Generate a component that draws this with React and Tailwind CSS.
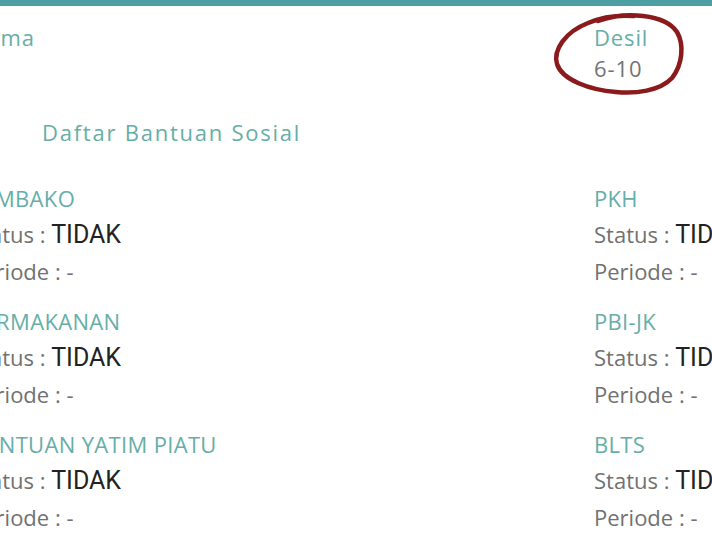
const programs = {
  left: ['SEMBAKO', 'PERMAKANAN', 'BANTUAN YATIM PIATU'],
  right: ['PKH', 'PBI-JK', 'BLTS'],
};

function Program({ name, status = 'TIDAK', period = '-' }) {
  return (
    <div className="mb-[14px] text-[22px] leading-[36px] whitespace-nowrap">
      <div className="text-[#66aea7] tracking-[0.015em]">{name}</div>
      <div className="text-[#717171]">
        Status :{' '}
        <span className="font-['Roboto'] text-[25px] text-[#222]">{status}</span>
      </div>
      <div className="text-[#717171]">Periode : {period}</div>
    </div>
  );
}

// hand drawn marker ring around the decile value
function Ring() {
  return (
    <svg
      className="absolute left-[-44px] top-[-14px] pointer-events-none"
      width="140"
      height="96"
      viewBox="0 0 140 96"
      fill="none"
    >
      <path
        d="M48 13 C75 3, 115 6, 127 24 C134 36, 133 56, 122 70 C110 83, 85 86, 66 84 C40 82, 12 72, 7 56 C3 42, 15 24, 38 15 C52 9, 70 7, 84 8"
        stroke="#8a1a1c"
        strokeWidth="4.5"
        strokeLinecap="round"
      />
    </svg>
  );
}

export default function App() {
  return (
    <div className="w-[712px] h-[534px] overflow-hidden bg-white font-['Open_Sans',sans-serif]">
      <div className="h-[6px] bg-[#4d9fa4]" />
      <div className="ml-[-30px]">
        <div className="grid grid-cols-[624px_1fr] pt-[16px] text-[22px] leading-[30px]">
          <div className="text-[#66aea7] tracking-[0.04em]">Nama</div>
          <div>
            <div className="relative w-fit">
              <div className="text-[#66aea7] tracking-[0.04em]">Desil</div>
              <div className="mt-[1px] text-[#747474] tracking-[0.04em]">6-10</div>
              <Ring />
            </div>
          </div>
        </div>
        <h2 className="ml-[72px] mt-[34px] text-[22px] leading-[30px] text-[#66aea7] tracking-[0.08em]">
          Daftar Bantuan Sosial
        </h2>
        <div className="grid grid-cols-[624px_1fr] mt-[33px]">
          <div>
            {programs.left.map((p) => (
              <Program key={p} name={p} />
            ))}
          </div>
          <div>
            {programs.right.map((p) => (
              <Program key={p} name={p} />
            ))}
          </div>
        </div>
      </div>
    </div>
  );
}
